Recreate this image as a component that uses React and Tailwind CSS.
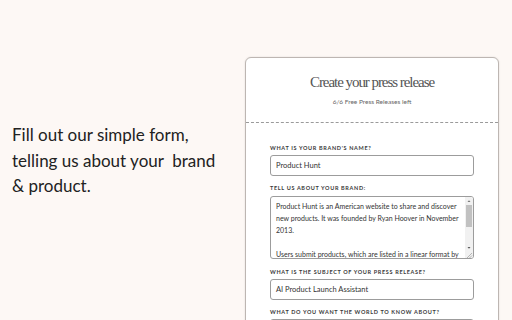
import React from "react";

const label = "block text-[5.5px] font-bold tracking-[0.12em] text-[#3a3a3a] uppercase mb-[3px]";
const input = "w-full h-[21px] border border-[#9c9c9c] rounded-[3px] px-[5px] text-[7.5px] text-[#333] bg-white flex items-center";

export default function App() {
  return (
    <div className="w-[512px] h-[320px] bg-[#fdf8f5] overflow-hidden flex" style={{ fontFamily: "Lato, 'Noto Sans', sans-serif" }}>
      <div className="w-[245px] shrink-0 pl-[12px] pt-[122px]">
        <p className="text-[17px] leading-[25.5px] text-[#222]" style={{ fontFamily: "Lato, sans-serif" }}>
          Fill out our simple form,<br />telling us about your&nbsp; brand<br />&amp; product.
        </p>
      </div>
      <div className="mt-[57px] w-[254px] h-[300px] bg-white border border-[#bdb6b2] rounded-[6px] shadow-[0_0_2px_rgba(0,0,0,0.12)]">
        <div className="h-[65px] border-b border-dashed border-[#9a9a9a] flex flex-col items-center pt-[15px]">
          <h1 className="text-[15px] leading-[18px] text-[#555] tracking-[-0.07em]" style={{ fontFamily: "'Liberation Serif', serif" }}>Create your press release</h1>
          <p className="text-[6.5px] text-[#666] mt-[6px]">6/6 Free Press Releases left</p>
        </div>
        <div className="px-[24px] pt-[21px] flex flex-col">
          <label className={label}>What is your brand's name?</label>
          <div className={input}>Product Hunt</div>
          <label className={label + " mt-[8px]"}>Tell us about your brand:</label>
          <div className="relative w-full h-[63px] border border-[#9c9c9c] rounded-[3px] bg-white overflow-hidden">
            <div className="pl-[5px] pr-[10px] pt-[3px] text-[7px] leading-[12px] text-[#333] whitespace-nowrap">
              <div>Product Hunt is an American website to share and discover</div>
              <div>new products. It was founded by Ryan Hoover in November</div>
              <div>2013.</div>
              <div>&nbsp;</div>
              <div>Users submit products, which are listed in a linear format by</div>
            </div>
            <div className="absolute right-0 top-0 bottom-0 w-[8px] bg-[#f1f1f1] flex flex-col items-center">
              <svg width="8" height="8" viewBox="0 0 8 8"><path d="M2.5 5 L4 3.3 L5.5 5 Z" fill="#777" /></svg>
              <div className="w-[6px] h-[22px] bg-[#c1c1c1]" />
              <div className="flex-1" />
              <svg width="8" height="8" viewBox="0 0 8 8"><path d="M2.5 3 L4 4.7 L5.5 3 Z" fill="#555" /></svg>
              <svg width="8" height="6" viewBox="0 0 8 6"><path d="M7 1 L2 6 M7 3.5 L4.5 6" stroke="#999" strokeWidth="0.7" /></svg>
            </div>
          </div>
          <label className={label + " mt-[9px]"}>What is the subject of your press release?</label>
          <div className={input}>AI Product Launch Assistant</div>
          <label className={label + " mt-[8px]"}>What do you want the world to know about?</label>
          <div className={input}></div>
        </div>
      </div>
    </div>
  );
}
